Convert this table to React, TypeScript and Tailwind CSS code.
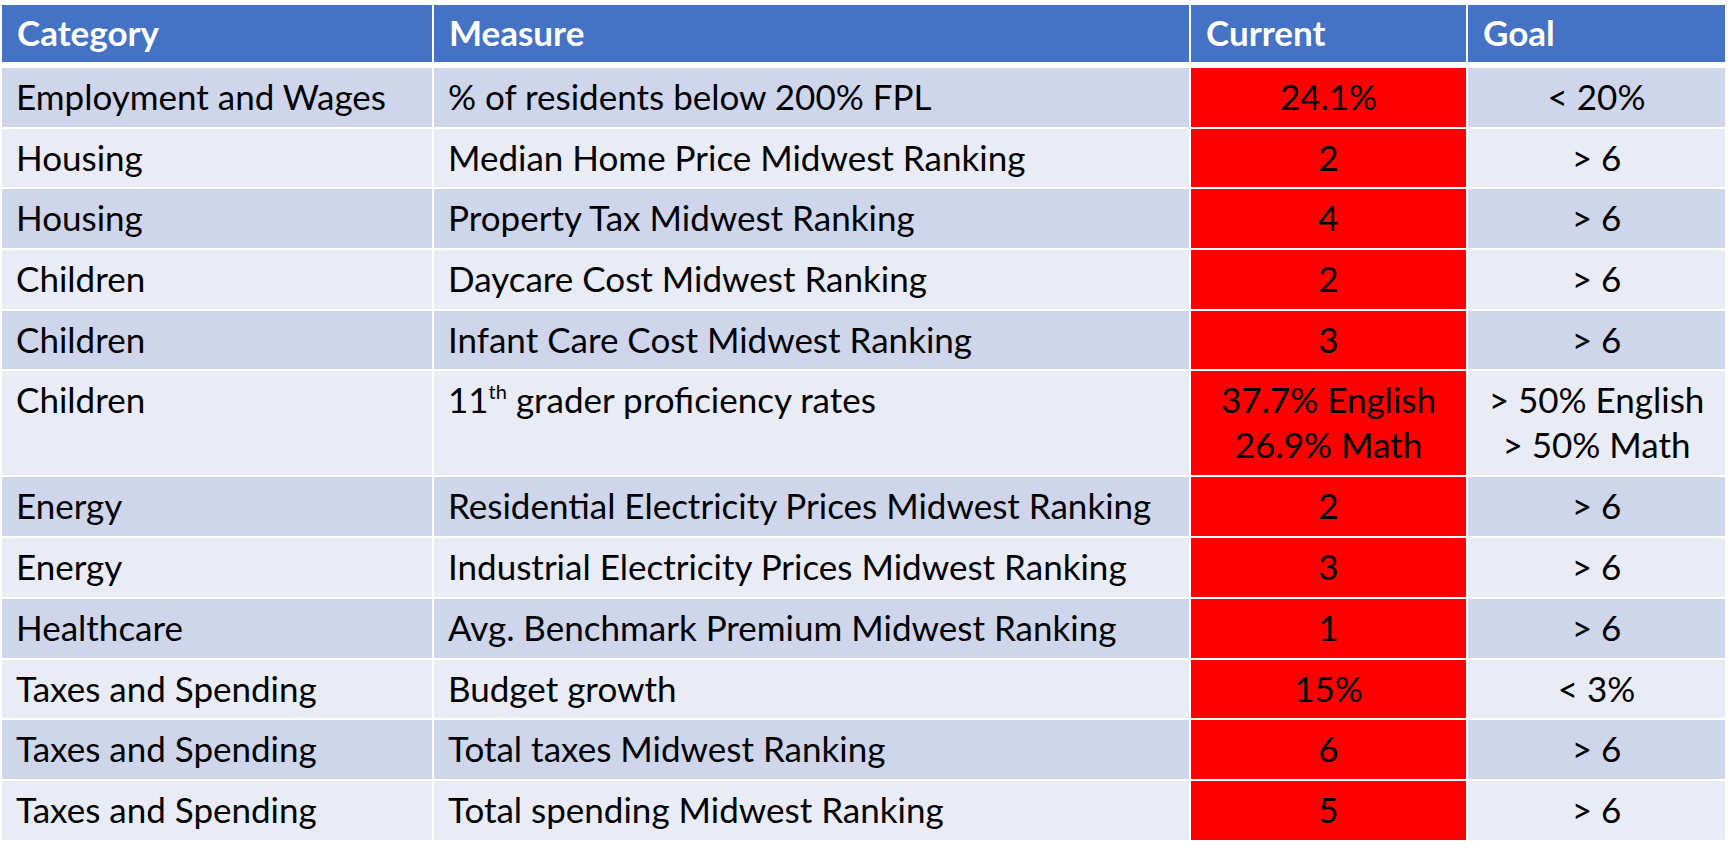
import type { ReactNode } from "react";

type Row = {
  category: string;
  measure: ReactNode;
  current: string[];
  goal: string[];
};

const rows: Row[] = [
  { category: "Employment and Wages", measure: "% of residents below 200% FPL", current: ["24.1%"], goal: ["< 20%"] },
  { category: "Housing", measure: "Median Home Price Midwest Ranking", current: ["2"], goal: ["> 6"] },
  { category: "Housing", measure: "Property Tax Midwest Ranking", current: ["4"], goal: ["> 6"] },
  { category: "Children", measure: "Daycare Cost Midwest Ranking", current: ["2"], goal: ["> 6"] },
  { category: "Children", measure: "Infant Care Cost Midwest Ranking", current: ["3"], goal: ["> 6"] },
  {
    category: "Children",
    measure: (
      <>
        11<sup className="relative top-[-2px] align-super text-[20px] leading-none">th</sup> grader proficiency rates
      </>
    ),
    current: ["37.7% English", "26.9% Math"],
    goal: ["> 50% English", "> 50% Math"],
  },
  { category: "Energy", measure: "Residential Electricity Prices Midwest Ranking", current: ["2"], goal: ["> 6"] },
  { category: "Energy", measure: "Industrial Electricity Prices Midwest Ranking", current: ["3"], goal: ["> 6"] },
  { category: "Healthcare", measure: "Avg. Benchmark Premium Midwest Ranking", current: ["1"], goal: ["> 6"] },
  { category: "Taxes and Spending", measure: "Budget growth", current: ["15%"], goal: ["< 3%"] },
  { category: "Taxes and Spending", measure: "Total taxes Midwest Ranking", current: ["6"], goal: ["> 6"] },
  { category: "Taxes and Spending", measure: "Total spending Midwest Ranking", current: ["5"], goal: ["> 6"] },
];

const gridCols = "grid grid-cols-[430px_755px_275px_257px] gap-x-[2px]";

export default function App() {
  return (
    <div className="min-h-screen bg-white pl-[2px] pt-[5px] font-['Lato',sans-serif] text-[35px] text-black">
      <div className={`${gridCols} h-[57px] font-bold text-white`}>
        {["Category", "Measure", "Current", "Goal"].map((h) => (
          <div key={h} className="flex items-center bg-[#4472C4] px-[15px] pb-[2px]">
            {h}
          </div>
        ))}
      </div>

      <div className="mt-[6px] flex flex-col gap-y-[2px]">
        {rows.map((row, i) => {
          const band = i % 2 === 0 ? "bg-[#CFD5EA]" : "bg-[#E9EBF5]";
          const tall = row.current.length > 1;
          return (
            <div key={i} className={`${gridCols} ${tall ? "h-[104px]" : "h-[58.7px]"} leading-[45px]`}>
              <div className={`${band} px-[14px] pt-[6px] whitespace-nowrap`}>{row.category}</div>
              <div className={`${band} px-[14px] pt-[6px] whitespace-nowrap`}>{row.measure}</div>
              <div className="bg-[#FF0000] px-2 pt-[6px] text-center whitespace-nowrap">
                {row.current.map((t) => (
                  <div key={t}>{t}</div>
                ))}
              </div>
              <div className={`${band} px-2 pt-[6px] text-center whitespace-nowrap`}>
                {row.goal.map((t) => (
                  <div key={t}>{t}</div>
                ))}
              </div>
            </div>
          );
        })}
      </div>
    </div>
  );
}
